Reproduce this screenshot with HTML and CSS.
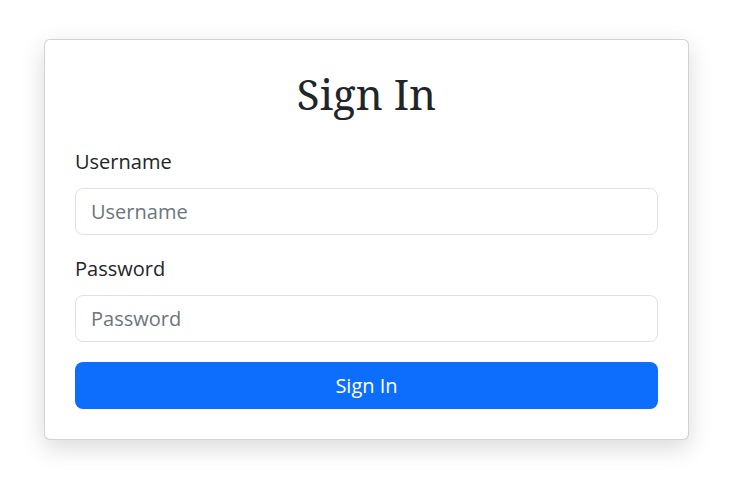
FILE: index.html
```html
<!DOCTYPE html>
<html lang="en">
<head>
<meta charset="utf-8">
<title>Sign In</title>
<link rel="stylesheet" href="styles.css">
</head>
<body>
<main class="page">
  <form class="card">
    <h1 class="title">Sign In</h1>
    <div class="field">
      <label class="label" for="username">Username</label>
      <input class="input" id="username" type="text" placeholder="Username">
    </div>
    <div class="field">
      <label class="label" for="password">Password</label>
      <input class="input" id="password" type="password" placeholder="Password">
    </div>
    <button class="button" type="button">Sign In</button>
  </form>
</main>
</body>
</html>
```
FILE: styles.css
```css
* { box-sizing: border-box; }
html, body { margin: 0; padding: 0; background: #fff; }
body {
  font-family: "Open Sans", "Noto Sans", sans-serif;
  color: #212529;
  min-height: 492px;
}
.page {
  padding: 39px 0 52px 44px;
}
.card {
  width: 645px;
  background: #fff;
  border: 1px solid rgba(0,0,0,0.175);
  border-radius: 6px;
  box-shadow: 0 8px 24px rgba(0,0,0,0.15);
  padding: 30px;
  display: flex;
  flex-direction: column;
}
.title {
  margin: 0 0 29px;
  font-family: "Noto Serif", "DejaVu Serif", "Liberation Serif", serif;
  font-weight: 400;
  font-size: 42px;
  line-height: 48px;
  text-align: center;
  color: #212529;
}
.field {
  display: flex;
  flex-direction: column;
  margin-bottom: 19px;
}
.field + .field { margin-bottom: 20px; }
.label {
  font-size: 20px;
  line-height: 30px;
  margin-bottom: 11px;
}
.input {
  height: 47px;
  padding: 0 15px;
  font-family: inherit;
  font-size: 20px;
  color: #212529;
  border: 1px solid #dee2e6;
  border-radius: 8px;
  outline: none;
}
.input::placeholder { color: #6c757d; opacity: 1; }
.button {
  height: 47px;
  border: none;
  border-radius: 8px;
  background: #0d6efd;
  color: #fff;
  font-family: inherit;
  font-size: 20px;
  cursor: pointer;
}
```
